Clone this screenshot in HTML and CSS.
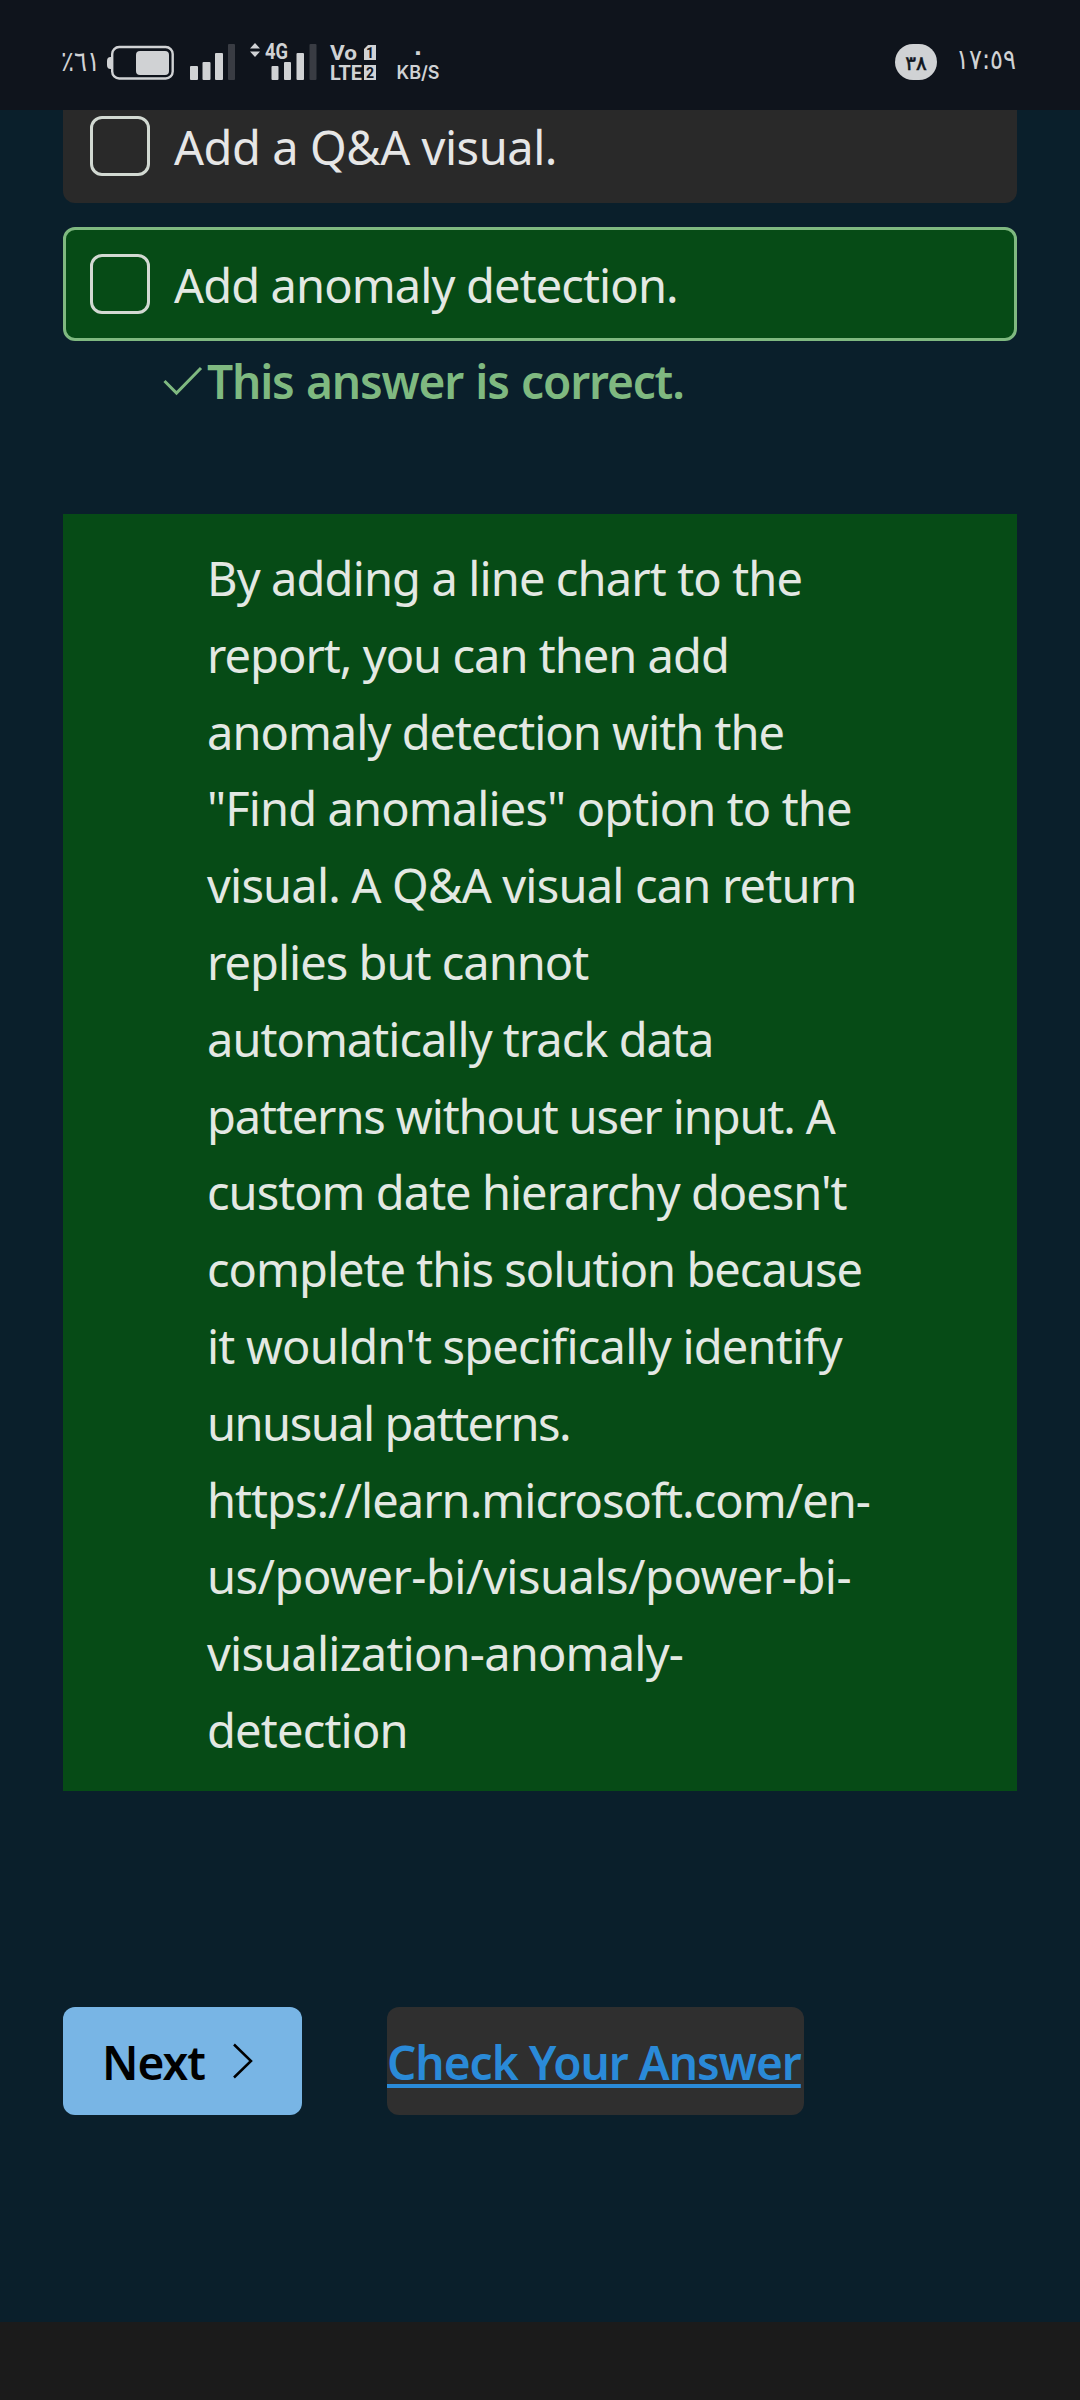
FILE: index.html
```html
<!DOCTYPE html>
<html lang="en">
<head>
<meta charset="utf-8">
<title>Knowledge check</title>
<link rel="stylesheet" href="styles.css">
</head>
<body>
<div class="screen">
  <header class="status">
    <svg class="battery-text" width="46" height="36" viewBox="0 0 46 36"><text class="digits" x="0" y="26" textLength="39" lengthAdjust="spacingAndGlyphs">٪٦١</text></svg>
    <svg class="battery" width="68" height="36" viewBox="0 0 68 36"><path d="M5 12H3.500Q0 12 0 16v4q0 4 3.500 4H5z" fill="#d0d2d4"/><rect x="5.200" y="2" width="60.500" height="31.500" rx="7" fill="none" stroke="#d0d2d4" stroke-width="2.400"/><rect x="29" y="6" width="33" height="24" rx="4" fill="#d0d2d4"/></svg>
    <svg class="signal" width="46" height="37" viewBox="0 0 46 37"><g fill="#d0d2d4"><rect y="22" width="8" height="14" rx="1"/><rect x="12.500" y="18" width="8" height="18" rx="1"/><rect x="25" y="9" width="8" height="27" rx="1"/></g><rect x="38" width="7" height="36" rx="1" fill="#393c43"/></svg>
    <svg class="signal-4g" width="68" height="38" viewBox="0 0 68 38"><g fill="#d0d2d4"><path d="M0 6.500 5 1l5 5.500zM0 9.500h10L5 15z"/><rect x="21.500" y="24" width="7" height="14" rx="1"/><rect x="34" y="20" width="7" height="18" rx="1"/><rect x="46.500" y="11" width="7.500" height="27" rx="1"/><text class="net" x="15" y="16.500" textLength="23" lengthAdjust="spacingAndGlyphs">4G</text></g><rect x="59.500" y="2" width="7" height="36" rx="1" fill="#393c43"/></svg>
    <svg class="volte" width="48" height="38" viewBox="0 0 48 38"><g fill="#d0d2d4"><text class="vo" x="0" y="17" textLength="27" lengthAdjust="spacingAndGlyphs">Vo</text><text class="vo" x="0" y="37" textLength="32" lengthAdjust="spacingAndGlyphs">LTE</text><path d="M38 2h8v15H34V6z"/><path d="M34 22h12v15H34z"/></g><text class="sim" x="40" y="14.500">1</text><text class="sim" x="40" y="34.500">2</text></svg>
    <div class="rate"><span class="rate-value">٠</span><span class="rate-unit">KB/S</span></div>
    <span class="count">٣٨</span>
    <svg class="clock" width="62" height="36" viewBox="0 0 62 36"><text class="digits" x="0" y="26" textLength="60" lengthAdjust="spacingAndGlyphs">١٧:٥٩</text></svg>
  </header>

  <main class="content">
    <div class="option first"><span class="box"></span><span class="label">Add a Q&amp;A visual.</span></div>
    <div class="option correct"><span class="box"></span><span class="label">Add anomaly detection.</span></div>
    <p class="verdict"><svg width="40" height="30" viewBox="0 0 40 30" fill="none" stroke="#7fb980" stroke-width="3"><path d="M1.500 15 13.500 27 38 2"/></svg><span>This answer is correct.</span></p>
    <p class="explain">
      <span>By adding a line chart to the</span>
      <span class="snug">report, you can then add</span>
      <span class="snug">anomaly detection with the</span>
      <span>"Find anomalies" option to the</span>
      <span class="open">visual. A Q&amp;A visual can return</span>
      <span class="snug">replies but cannot</span>
      <span class="snug">automatically track data</span>
      <span class="tight">patterns without user input. A</span>
      <span class="snug">custom date hierarchy doesn't</span>
      <span class="snug">complete this solution because</span>
      <span class="open">it wouldn't specifically identify</span>
      <span class="tightest">unusual patterns.</span>
      <span class="snug">https://learn.microsoft.com/en-</span>
      <span class="wide">us/power-bi/visuals/power-bi-</span>
      <span class="open">visualization-anomaly-</span>
      <span class="open">detection</span>
    </p>
    <div class="actions">
      <button class="next"><span>Next</span><svg width="22" height="36" viewBox="0 0 22 36" fill="none" stroke="#000" stroke-width="2.500"><path d="M2 1.500 19 18 2 34.500"/></svg></button>
      <a class="check"><span>Check Your Answer</span></a>
    </div>
  </main>
  <footer class="navbar"></footer>
</div>
</body>
</html>
```
FILE: styles.css
```css
* { box-sizing: border-box; }
body { margin: 0; background: #0a1f2b; }
.screen {
  width: 1080px; height: 2400px; display: flex; flex-direction: column; overflow: hidden;
  font: 400 47px/76.8px "Noto Sans", "Open Sans", sans-serif; letter-spacing: -0.88px; color: #e3e8e3;
}
.status {
  height: 110px; flex: none; display: flex; align-items: flex-start; padding: 0 0 0 61px;
  background: #0f141c; color: #d0d2d4; letter-spacing: 0; line-height: 1;
}
.status svg { overflow: visible; }
.digits { font: 28px "DejaVu Sans", sans-serif; fill: #d0d2d4; }
.battery-text { margin-top: 45px; }
.battery { margin-top: 45px; }
.signal { margin: 44px 0 0 15px; }
.signal-4g { margin: 42px 0 0 14px; }
.volte { margin: 43px 0 0 12px; }
.net { font: 700 22px "Roboto", sans-serif; }
.vo { font: 700 21px "Roboto", sans-serif; }
.sim { font: 700 14px "Roboto", sans-serif; fill: #0f141c; text-anchor: middle; }
.rate { width: 44px; margin: 42px 0 0 18px; display: flex; flex-direction: column; align-items: center; }
.rate-value { font: 700 22px/20px "DejaVu Sans", sans-serif; }
.rate-unit { margin-top: 2px; font: 600 18px/18px "Inter", sans-serif; }
.count {
  width: 42px; height: 36px; margin: 44px 0 0 auto; border-radius: 18px; background: #d0d2d4; color: #0f141c;
  font: 400 20px/38px "DejaVu Sans", sans-serif; -webkit-text-stroke: 0.6px #0f141c; text-align: center;
}
.clock { margin: 43px 62px 0 19px; }

.content { flex: 1; padding: 0 63px; }
.option { height: 114px; display: flex; align-items: center; padding: 0 27px; gap: 24px; border-radius: 12px; white-space: nowrap; }
.label { padding-top: 3px; }
.first { height: 93px; padding-bottom: 21px; border-radius: 0 0 12px 12px; background: #292929; color: #e6e6e6; letter-spacing: -0.45px; }
.correct { margin-top: 24px; padding: 0 24px; border: 3px solid #7fb980; background: #064b16; }
.box { width: 60px; height: 60px; border: 3px solid #d2d9d2; border-radius: 12px; }
.verdict { margin: 0; height: 173px; padding: 2px 0 0 100px; display: flex; gap: 4px; color: #7fb980; font-size: 46px; font-weight: 600; letter-spacing: -1.15px; word-spacing: 1.5px; white-space: nowrap; }
.verdict svg { margin-top: 23px; }
.explain { margin: 0; height: 1277px; padding: 26px 0 22px 144px; background: #064b16; white-space: nowrap; }
.explain span { display: block; }
.explain .open { letter-spacing: -0.8px; }
.explain .snug { letter-spacing: -0.98px; }
.explain .tight { letter-spacing: -1.12px; }
.explain .tightest { letter-spacing: -1.5px; }
.explain .wide { letter-spacing: -0.5px; }
.actions { display: flex; gap: 85px; margin-top: 216px; }
.next, .check {
  height: 108px; border: 0; border-radius: 12px; font: inherit; font-size: 46px; font-weight: 600; letter-spacing: -1px;
  display: flex; align-items: center; white-space: nowrap;
}
.next span, .check span { padding-top: 3px; }
.next { width: 239px; padding: 0 0 0 39px; background: #78b5e5; color: #000; }
.next span { width: 130px; text-align: left; }
.check { width: 417px; background: #2f2f2f; color: #2a8ad8; }
.check span { text-decoration: underline; text-decoration-thickness: 4px; text-underline-offset: 4px; }
.navbar { height: 78px; flex: none; background: #1b1b1b; }
```
